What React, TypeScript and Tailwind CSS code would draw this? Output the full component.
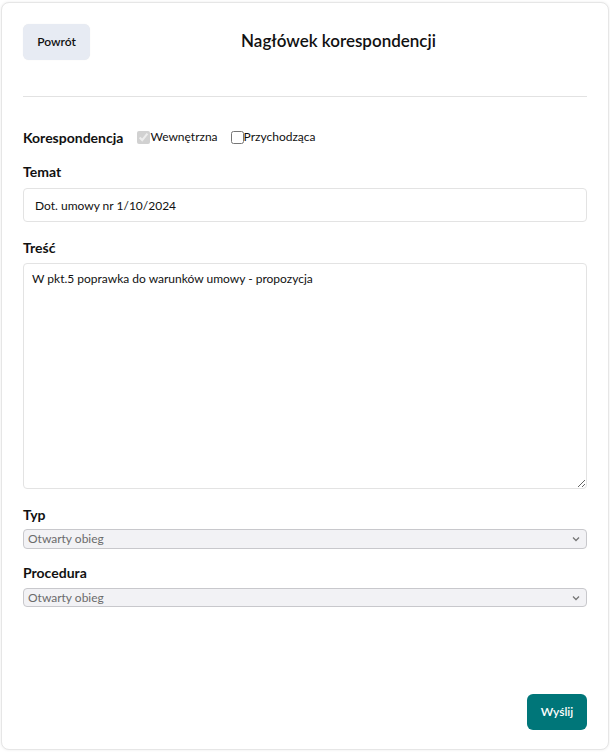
import React from "react";

export default function App() {
  return (
    <div
      className="w-[610px] h-[752px] bg-white pt-[2px] px-[1px] pb-[2px]"
      style={{ fontFamily: "Lato, 'Noto Sans', sans-serif" }}
    >
      <div className="h-full rounded-lg border border-[#e6e6e6] shadow-[0_0_3px_rgba(0,0,0,0.08)] bg-white px-[21px] pt-[21px] flex flex-col">
        <div className="flex items-center h-[36px]">
          <button className="w-[67px] h-[36px] rounded-md bg-[#e7ebf3] text-[12px] font-semibold text-[#111] shadow-[0_0_1px_rgba(0,0,0,0.1)]">
            Powrót
          </button>
          <h1 className="flex-1 text-center text-[17px] font-semibold text-[#111] -mt-[2px]">
            Nagłówek korespondencji
          </h1>
        </div>
        <div className="mt-[36px] border-t border-[#e2e2e2]" />
        <div className="mt-[31px] flex items-center h-[18px]">
          <span className="text-[14px] font-bold text-[#111]">Korespondencja</span>
          <label className="ml-[14px] flex items-center text-[12px] text-[#111]">
            <input type="checkbox" checked disabled readOnly className="m-0 w-[13px] h-[13px]" />
            <span>Wewnętrzna</span>
          </label>
          <label className="ml-[13px] flex items-center text-[12px] text-[#111]">
            <input type="checkbox" className="m-0 w-[13px] h-[13px]" />
            <span>Przychodząca</span>
          </label>
        </div>
        <div className="mt-[17px] text-[14px] font-bold text-[#111] leading-[18px]">Temat</div>
        <input
          className="mt-[7px] h-[34px] w-full rounded border border-[#e3e3e3] px-[11px] text-[12px] text-[#111] outline-none"
          defaultValue="Dot. umowy nr 1/10/2024"
        />
        <div className="mt-[17px] text-[14px] font-bold text-[#111] leading-[18px]">Treść</div>
        <textarea
          className="mt-[6px] h-[226px] w-full rounded border border-[#e3e3e3] px-[8px] py-[6px] text-[12px] text-[#111] outline-none"
          defaultValue="W pkt.5 poprawka do warunków umowy - propozycja"
        />
        <div className="mt-[17px] text-[14px] font-bold text-[#111] leading-[18px]">Typ</div>
        <div className="mt-[5px] relative h-[20px] rounded border border-[#c8c8cc] bg-[#f2f2f5] flex items-center px-[4px] text-[12px] text-[#6b6b6b]">
          <span>Otwarty obieg</span>
          <svg className="absolute right-[6px] top-[6px]" width="8" height="6" viewBox="0 0 8 6">
            <path d="M1 1.5 L4 4.5 L7 1.5" fill="none" stroke="#777" strokeWidth="1.3" />
          </svg>
        </div>
        <div className="mt-[15px] text-[14px] font-bold text-[#111] leading-[18px]">Procedura</div>
        <div className="mt-[6px] relative h-[19px] rounded border border-[#c8c8cc] bg-[#f2f2f5] flex items-center px-[4px] text-[12px] text-[#6b6b6b]">
          <span>Otwarty obieg</span>
          <svg className="absolute right-[6px] top-[6px]" width="8" height="6" viewBox="0 0 8 6">
            <path d="M1 1.5 L4 4.5 L7 1.5" fill="none" stroke="#777" strokeWidth="1.3" />
          </svg>
        </div>
        <div className="flex-1" />
        <div className="flex justify-end mb-[19px]">
          <button className="w-[60px] h-[36px] rounded-md bg-[#007679] text-white text-[12px] font-semibold">
            Wyślij
          </button>
        </div>
      </div>
    </div>
  );
}
